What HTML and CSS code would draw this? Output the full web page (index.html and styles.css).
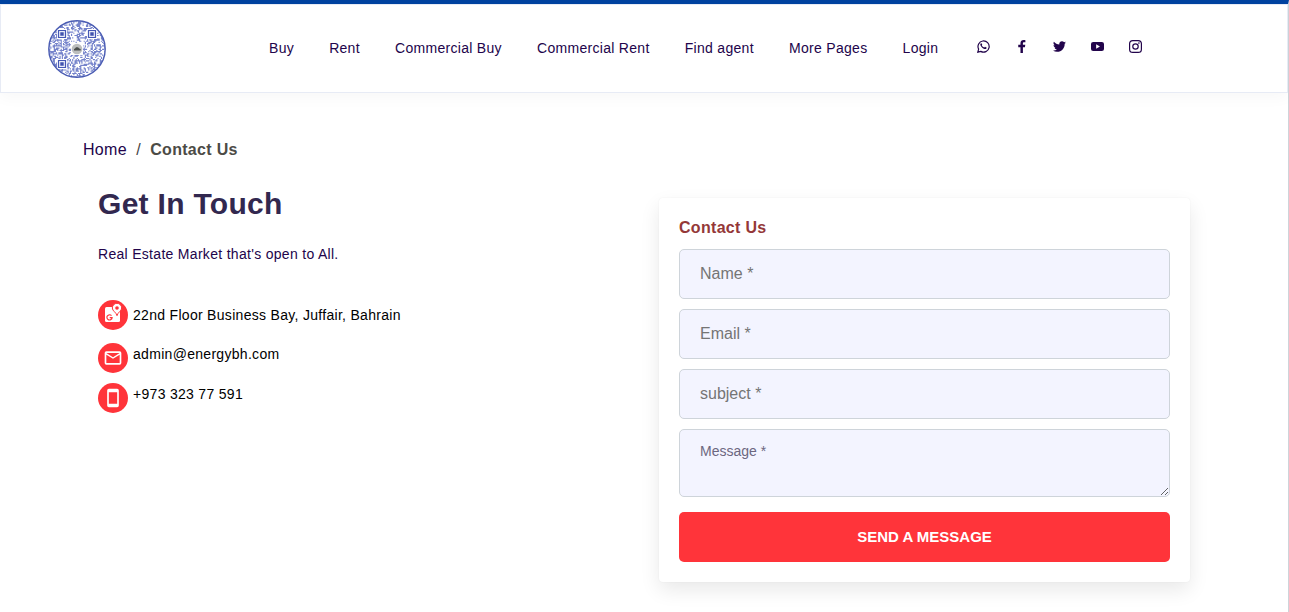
FILE: index.html
```html
<!DOCTYPE html>
<html lang="en">
<head>
<meta charset="utf-8">
<title>Contact Us</title>
<link rel="stylesheet" href="styles.css">
</head>
<body>
<div class="page">
  <header class="header">
    <a class="logo" aria-label="Logo">
      <svg viewBox="0 0 58 58" width="58" height="58">
        <defs><clipPath id="disc"><circle cx="29" cy="29" r="28"/></clipPath></defs>
        <circle cx="29" cy="29" r="28" fill="#fff"/>
        <g clip-path="url(#disc)">
          <path id="modules" fill="#7583cb"/>
          <path d="M9 9h10v10H9zM39 9h10v10H39zM9 39h10v10H9zM23 23h12v12H23z" fill="#fff"/>
          <path d="M10.500 10.500h7v7h-7zM40.500 10.500h7v7h-7zM10.500 40.500h7v7h-7z" fill="#e9ecf8" stroke="#4558b5" stroke-width="1.200"/>
          <path d="M12.300 12.300h3.400v3.400h-3.400zM42.300 12.300h3.400v3.400h-3.400zM12.300 42.300h3.400v3.400h-3.400z" fill="#3f51ae"/>
        </g>
        <circle cx="29" cy="29" r="28.200" fill="none" stroke="#4a5cb3" stroke-width="1.400"/>
        <circle cx="29" cy="29" r="5.300" fill="#bcbebe"/>
        <path d="M26 30.500V29l1-.5 1-1.300h2l1.300 1.300 1.400.500v1.500z" fill="#4b4f4d"/>
      </svg>
    </a>
    <nav class="nav">
      <a>Buy</a><a>Rent</a><a>Commercial Buy</a><a>Commercial Rent</a><a>Find agent</a><a>More Pages</a><a>Login</a>
    </nav>
    <div class="social">
      <svg viewBox="0 0 24 24"><path d="M1.500 22.500l1.500-5.700A10.300 10.300 0 1 1 7 21z" fill="none" stroke="currentColor" stroke-width="2.200"/><path d="M8.300 6c-.5-.2-1 0-1.500.5-.9 1-.9 2.500 0 4 1.600 2.900 3.800 5 6.900 6.100 1.700.6 3.300-.1 3.900-1.500.2-.5.200-1.100 0-1.300l-2.300-1.100c-.5-.1-.7 0-1 .300l-.8 1c-2.200-.9-3.700-2.200-4.700-4l.9-1.400z" fill="currentColor"/></svg>
      <svg viewBox="0 0 24 24"><path d="M14.600 24V13.500h3.700l.7-4.600h-4.400V6.400c0-1.400.5-2.300 2.300-2.300h2.300V.4C18.300.1 17.200 0 16 0c-3.500 0-5.900 2.100-5.900 5.900v3H6v4.600h4.100V24z" fill="currentColor"/></svg>
      <svg viewBox="0 0 24 24"><path d="M24 4.560c-.9.400-1.800.7-2.800.8a4.900 4.900 0 0 0 2.100-2.700c-1 .6-2 1-3.100 1.200a4.900 4.900 0 0 0-8.400 4.500C7.700 8.200 4.100 6.200 1.700 3.200a4.900 4.900 0 0 0 1.500 6.500c-.8 0-1.600-.2-2.200-.6v.1c0 2.400 1.700 4.300 3.900 4.800-.7.200-1.500.2-2.200.1a4.900 4.900 0 0 0 4.600 3.400A9.900 9.900 0 0 1 0 19.500 14 14 0 0 0 7.500 21.700c9.100 0 14.300-7.700 14-14.600 1-.7 1.800-1.600 2.500-2.540z" fill="currentColor"/></svg>
      <svg viewBox="0 0 24 24"><path fill-rule="evenodd" d="M4 3.500h16q4 0 4 4v9q0 4-4 4H4q-4 0-4-4v-9q0-4 4-4zM9.500 7.800v8.400l7-4.200z" fill="currentColor"/></svg>
      <svg viewBox="0 0 24 24"><g fill="none" stroke="currentColor" stroke-width="2.200"><rect x="1.100" y="1.100" width="21.800" height="21.800" rx="6"/><circle cx="12" cy="12" r="5"/></g><circle cx="18.300" cy="5.700" r="1.500" fill="currentColor"/></svg>
    </div>
  </header>
  <main class="main">
    <div class="breadcrumb"><a>Home</a><span>/</span><b>Contact Us</b></div>
    <div class="columns">
      <section class="info">
        <h1>Get In Touch</h1>
        <p class="intro">Real Estate Market that's open to All.</p>
        <ul class="contacts">
          <li class="address"><i><svg viewBox="0 0 20 20" width="20" height="20"><path d="M3.500 4H17v13.500q0 1.500-1.500 1.500h-12Q2 19 2 17.500v-12Q2 4 3.500 4z" fill="#fff"/><path d="M8.500 12.700A2.600 2.600 0 1 0 9.100 14.600H6.700" fill="none" stroke="#ff343a" stroke-width="1.200"/><path d="M14 .300A4.700 4.700 0 0 0 9.300 5c0 3.200 3.900 4 4.700 7.700.8-3.700 4.700-4.500 4.700-7.700A4.700 4.700 0 0 0 14 .300z" fill="#fff" stroke="#ff343a" stroke-width="1"/><circle cx="14" cy="5" r="1.800" fill="#ff343a"/></svg></i><span>22nd Floor Business Bay, Juffair, Bahrain</span></li>
          <li class="mail"><i><svg viewBox="0 0 24 24" width="20" height="20"><path fill-rule="evenodd" d="M4 4h16q2 0 2 2v12q0 2-2 2H4q-2 0-2-2V6q0-2 2-2zm16 4-8 5-8-5v10h16zm0-2H4l8 5z" fill="#fff"/></svg></i><span>admin@energybh.com</span></li>
          <li><i><svg viewBox="0 0 24 24" width="20" height="20"><path fill-rule="evenodd" d="M7 1h10q2 0 2 2v18q0 2-2 2H7q-2 0-2-2V3q0-2 2-2zM7 5v14h10V5z" fill="#fff"/></svg></i><span>+973 323 77 591</span></li>
        </ul>
      </section>
      <form class="card">
        <h2>Contact Us</h2>
        <input class="field" placeholder="Name *">
        <input class="field" placeholder="Email *">
        <input class="field" placeholder="subject *">
        <textarea class="field area" placeholder="Message *"></textarea>
        <button class="send" type="button">SEND A MESSAGE</button>
      </form>
    </div>
  </main>
</div>
<script src="logo.js"></script>
</body>
</html>
```
FILE: styles.css
```css
* { box-sizing: border-box; }
html { overflow: hidden; }
body {
  margin: 0;
  font: 14px/20px "Liberation Sans", Arial, sans-serif;
  color: #22044b;
  background: #fff;
}
.page {
  height: 612px;
  border-top: 4px solid #0043a0;
  border-right: 1px solid #ced4da;
}
.header {
  display: flex;
  align-items: center;
  height: 89px;
  padding: 1px 0 0 47px;
  border: 1px solid #e7ebf5;
  box-shadow: 0 5px 14px rgba(0, 0, 0, .03);
}
.logo { width: 58px; height: 58px; }
.logo svg, .social svg, .contacts svg { display: block; }
.nav {
  display: flex;
  gap: 35.1px;
  margin: -2px 0 0 163px;
  letter-spacing: .3px;
  white-space: nowrap;
}
.social { display: flex; gap: 25px; margin: -5px 0 0 39px; }
.social svg { width: 13px; height: 13px; }
.main { padding: 47px 0 0 83px; }
.breadcrumb {
  display: flex;
  gap: 9.3px;
  font-size: 16px;
  letter-spacing: .3px;
}
.breadcrumb span { color: #444; }
.breadcrumb b { color: #4c4b46; }
.columns { display: flex; align-items: flex-start; padding-left: 15px; }
.info { width: 561px; padding-top: 24px; }
.info h1 {
  margin: 0;
  font-size: 30px;
  line-height: 40px;
  letter-spacing: .3px;
  color: #32284f;
}
.intro { margin: 20px 0 36px; letter-spacing: .3px; }
.contacts {
  margin: 0;
  padding: 0;
  list-style: none;
  color: #000;
  letter-spacing: .3px;
}
.contacts li { display: flex; gap: 5px; height: 40px; }
.contacts .address { height: 43px; }
.contacts span { padding-top: 1px; }
.contacts .address span { padding-top: 5px; }
.contacts i {
  display: grid;
  place-items: center;
  width: 30px;
  height: 30px;
  border-radius: 50%;
  background: #ff343a;
}
.contacts .address i { place-items: start center; padding-top: 3px; }
.card {
  display: flex;
  flex-direction: column;
  gap: 10px;
  width: 531px;
  height: 384px;
  margin-top: 38px;
  padding: 19px 20px 20px;
  border-radius: 4px;
  background: #fff;
  box-shadow: 0 8px 20px rgba(0, 0, 0, .09), 0 0 2px rgba(0, 0, 0, .06);
}
.card h2 {
  margin: 0;
  padding-bottom: 1px;
  font-size: 16px;
  line-height: 21px;
  letter-spacing: .3px;
  color: #943838;
}
.field {
  width: 100%;
  height: 50px;
  padding: 0 20px;
  border: 1px solid #ced4da;
  border-radius: 5px;
  background: #f3f4ff;
  font: 16px "Liberation Sans", Arial, sans-serif;
}
.field::placeholder { color: #757575; }
.area {
  display: block;
  height: 68px;
  padding-top: 11px;
  font-size: 14px;
  line-height: 20px;
}
.area::placeholder { color: #6c6780; }
.send {
  height: 50px;
  margin-top: 5px;
  padding-bottom: 3px;
  border: 0;
  border-radius: 5px;
  background: #ff343a;
  color: #fff;
  font: bold 15px "Liberation Sans", Arial, sans-serif;
}
```
FILE: logo.js
```js
// Fills the logo disc with a repeatable pattern of small code modules.
let seed = 7;
let path = "";
const size = 1.15;
for (let y = 0; y < 58; y += size) {
  for (let x = 0; x < 58; x += size) {
    seed = (seed * 16807) % 2147483647;
    if (seed / 2147483647 < 0.5) path += `M${x.toFixed(2)} ${y.toFixed(2)}h${size}v${size}h-${size}z`;
  }
}
document.getElementById("modules").setAttribute("d", path);
```
